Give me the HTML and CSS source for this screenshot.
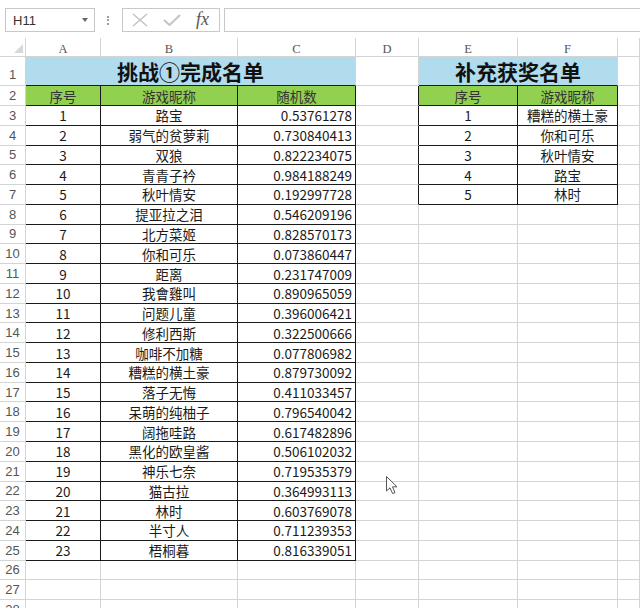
FILE: index.html
```html
<!DOCTYPE html>
<html lang="zh-CN">
<head>
    <meta charset="UTF-8">
    <meta name="viewport" content="width=device-width, initial-scale=1.0">
    <title>挑战完成名单</title>
    <link rel="stylesheet" href="styles.css">
</head>
<body>
    <div class="toolbar">
        <div class="name-box"><span>H11</span><span class="name-arrow"></span></div>
        <div class="grip"></div>
        <div class="fx-buttons">
            <svg class="fx-icon" width="16" height="14" viewBox="0 0 16 14"><path d="M1 1 L15 13 M15 1 L1 13" stroke="#c4c4c4" stroke-width="1.6" fill="none"/></svg>
            <svg class="fx-icon" width="18" height="12" viewBox="0 0 18 12"><path d="M1 6 L6.5 11 L17 1" stroke="#c4c4c4" stroke-width="2" fill="none"/></svg>
            <span class="fx-label">fx</span>
        </div>
        <div class="formula"></div>
    </div>

    <div class="sheet">
        <div class="corner"><span class="corner-mark"></span></div>
        <div class="col-head">A</div>
        <div class="col-head">B</div>
        <div class="col-head">C</div>
        <div class="col-head">D</div>
        <div class="col-head">E</div>
        <div class="col-head">F</div>
        <div class="col-head"></div>

        <div class="row-head first">1</div>
        <div class="title span3">挑战①完成名单</div>
        <div></div>
        <div class="title span2">补充获奖名单</div>
        <div></div>

        <div class="row-head">2</div>
        <div class="t head">序号</div>
        <div class="t head">游戏昵称</div>
        <div class="t head">随机数</div>
        <div class="edge-r"></div>
        <div class="t head">序号</div>
        <div class="t head">游戏昵称</div>
        <div></div>

        <div class="row-head">3</div>
        <div class="t">1</div><div class="t">路宝</div><div class="t num">0.53761278</div>
        <div class="edge-r"></div><div class="t">1</div><div class="t">糟糕的横土豪</div><div></div>

        <div class="row-head">4</div>
        <div class="t">2</div><div class="t">弱气的贫萝莉</div><div class="t num">0.730840413</div>
        <div class="edge-r"></div><div class="t">2</div><div class="t">你和可乐</div><div></div>

        <div class="row-head">5</div>
        <div class="t">3</div><div class="t">双狼</div><div class="t num">0.822234075</div>
        <div class="edge-r"></div><div class="t">3</div><div class="t">秋叶情安</div><div></div>

        <div class="row-head">6</div>
        <div class="t">4</div><div class="t">青青子衿</div><div class="t num">0.984188249</div>
        <div class="edge-r"></div><div class="t">4</div><div class="t">路宝</div><div></div>

        <div class="row-head">7</div>
        <div class="t">5</div><div class="t">秋叶情安</div><div class="t num">0.192997728</div>
        <div class="edge-r"></div><div class="t">5</div><div class="t">林时</div><div></div>

        <div class="row-head">8</div>
        <div class="t">6</div><div class="t">提亚拉之泪</div><div class="t num">0.546209196</div>
        <div></div><div></div><div></div><div></div>

        <div class="row-head">9</div>
        <div class="t">7</div><div class="t">北方菜姬</div><div class="t num">0.828570173</div>
        <div></div><div></div><div></div><div></div>

        <div class="row-head">10</div>
        <div class="t">8</div><div class="t">你和可乐</div><div class="t num">0.073860447</div>
        <div></div><div></div><div></div><div></div>

        <div class="row-head">11</div>
        <div class="t">9</div><div class="t">距离</div><div class="t num">0.231747009</div>
        <div></div><div></div><div></div><div></div>

        <div class="row-head">12</div>
        <div class="t">10</div><div class="t">我會雞叫</div><div class="t num">0.890965059</div>
        <div></div><div></div><div></div><div></div>

        <div class="row-head">13</div>
        <div class="t">11</div><div class="t">问题儿童</div><div class="t num">0.396006421</div>
        <div></div><div></div><div></div><div></div>

        <div class="row-head">14</div>
        <div class="t">12</div><div class="t">修利西斯</div><div class="t num">0.322500666</div>
        <div></div><div></div><div></div><div></div>

        <div class="row-head">15</div>
        <div class="t">13</div><div class="t">咖啡不加糖</div><div class="t num">0.077806982</div>
        <div></div><div></div><div></div><div></div>

        <div class="row-head">16</div>
        <div class="t">14</div><div class="t">糟糕的横土豪</div><div class="t num">0.879730092</div>
        <div></div><div></div><div></div><div></div>

        <div class="row-head">17</div>
        <div class="t">15</div><div class="t">落子无悔</div><div class="t num">0.411033457</div>
        <div></div><div></div><div></div><div></div>

        <div class="row-head">18</div>
        <div class="t">16</div><div class="t">呆萌的纯柚子</div><div class="t num">0.796540042</div>
        <div></div><div></div><div></div><div></div>

        <div class="row-head">19</div>
        <div class="t">17</div><div class="t">阔拖哇路</div><div class="t num">0.617482896</div>
        <div></div><div></div><div></div><div></div>

        <div class="row-head">20</div>
        <div class="t">18</div><div class="t">黑化的欧皇酱</div><div class="t num">0.506102032</div>
        <div></div><div></div><div></div><div></div>

        <div class="row-head">21</div>
        <div class="t">19</div><div class="t">神乐七奈</div><div class="t num">0.719535379</div>
        <div></div><div></div><div></div><div></div>

        <div class="row-head">22</div>
        <div class="t">20</div><div class="t">猫古拉</div><div class="t num">0.364993113</div>
        <div></div><div></div><div></div><div></div>

        <div class="row-head">23</div>
        <div class="t">21</div><div class="t">林时</div><div class="t num">0.603769078</div>
        <div></div><div></div><div></div><div></div>

        <div class="row-head">24</div>
        <div class="t">22</div><div class="t">半寸人</div><div class="t num">0.711239353</div>
        <div></div><div></div><div></div><div></div>

        <div class="row-head">25</div>
        <div class="t">23</div><div class="t">梧桐暮</div><div class="t num">0.816339051</div>
        <div></div><div></div><div></div><div></div>

        <div class="row-head">26</div>
        <div></div><div></div><div></div><div></div><div></div><div></div><div></div>

        <div class="row-head">27</div>
        <div></div><div></div><div></div><div></div><div></div><div></div><div></div>

        <div class="row-head">28</div>
        <div></div><div></div><div></div><div></div><div></div><div></div><div></div>
    </div>

    <svg class="cursor" width="13" height="19" viewBox="0 0 13 19">
        <path d="M0.5 0.5 L0.5 15 L4 11.8 L6.6 17.6 L9 16.6 L6.5 10.8 L11 10.8 Z" fill="#fff" stroke="#555" stroke-width="1"/>
    </svg>
</body>
</html>
```

FILE: styles.css
```css
* {
    box-sizing: border-box;
}
body {
    margin: 0;
    background-color: #ffffff;
    font-family: "Noto Sans CJK SC", sans-serif;
    color: #1a1a1a;
    overflow: hidden;
    position: relative;
}
.toolbar {
    height: 38px;
    padding-top: 8px;
    display: flex;
    align-items: flex-start;
}
.name-box {
    margin-left: 5px;
    width: 90px;
    height: 24px;
    border: 1px solid #c8c8c8;
    display: flex;
    align-items: center;
    justify-content: space-between;
    padding: 0 6px 0 7px;
    font: 13px "Liberation Sans", sans-serif;
    color: #333;
}
.name-arrow {
    border-left: 3.5px solid transparent;
    border-right: 3.5px solid transparent;
    border-top: 4px solid #666;
}
.grip {
    width: 2px;
    height: 9px;
    margin: 8px 13px 0 12px;
    border-left: 2px dotted #a0a0a0;
}
.fx-buttons {
    width: 98px;
    height: 24px;
    border: 1px solid #c8c8c8;
    display: flex;
    align-items: center;
    padding-left: 9px;
    gap: 15px;
}
.fx-label {
    font: italic 18px "Liberation Serif", serif;
    color: #555;
    margin-top: -2px;
}
.formula {
    flex: 1;
    margin-left: 4px;
    height: 24px;
    border: 1px solid #c8c8c8;
    border-right: none;
}
.sheet {
    display: grid;
    grid-template-columns: 26px 75px 137px 118px 63px 99px 100px 1fr;
    grid-template-rows: 19px 29px 20px;
    grid-auto-rows: 19.78px;
}
.sheet > div {
    border-right: 1px solid #d4d4d4;
    border-bottom: 1px solid #d4d4d4;
    display: flex;
    align-items: center;
    justify-content: center;
    font-size: 13.5px;
    white-space: nowrap;
    overflow: hidden;
}
.sheet > .corner {
    justify-content: flex-end;
    align-items: flex-end;
    padding: 0 2px 3px 0;
}
.corner-mark {
    border-left: 9px solid transparent;
    border-bottom: 9px solid #d8d8d8;
}
.sheet > .col-head {
    font: 12.5px "Liberation Serif", serif;
    color: #555;
    padding-top: 5px;
}
.sheet > .row-head {
    font: 13px "Liberation Sans", sans-serif;
    color: #555;
}
.sheet > .row-head.first {
    align-items: flex-end;
    padding-bottom: 3px;
}
.sheet > .title {
    background-color: #b0dcee;
    font-size: 21px;
    font-weight: 700;
    color: #111;
    border-bottom-color: #1a1a1a;
}
.span3 {
    grid-column: span 3;
}
.span2 {
    grid-column: span 2;
}
.sheet > .t {
    border-right-color: #1a1a1a;
    border-bottom-color: #1a1a1a;
}
.sheet > .head {
    background-color: #92d050;
    color: #333;
}
.sheet > .num {
    justify-content: flex-end;
    padding-right: 3px;
}
.sheet > .edge-r {
    border-right-color: #1a1a1a;
}
.cursor {
    position: absolute;
    left: 386px;
    top: 476px;
}
```
